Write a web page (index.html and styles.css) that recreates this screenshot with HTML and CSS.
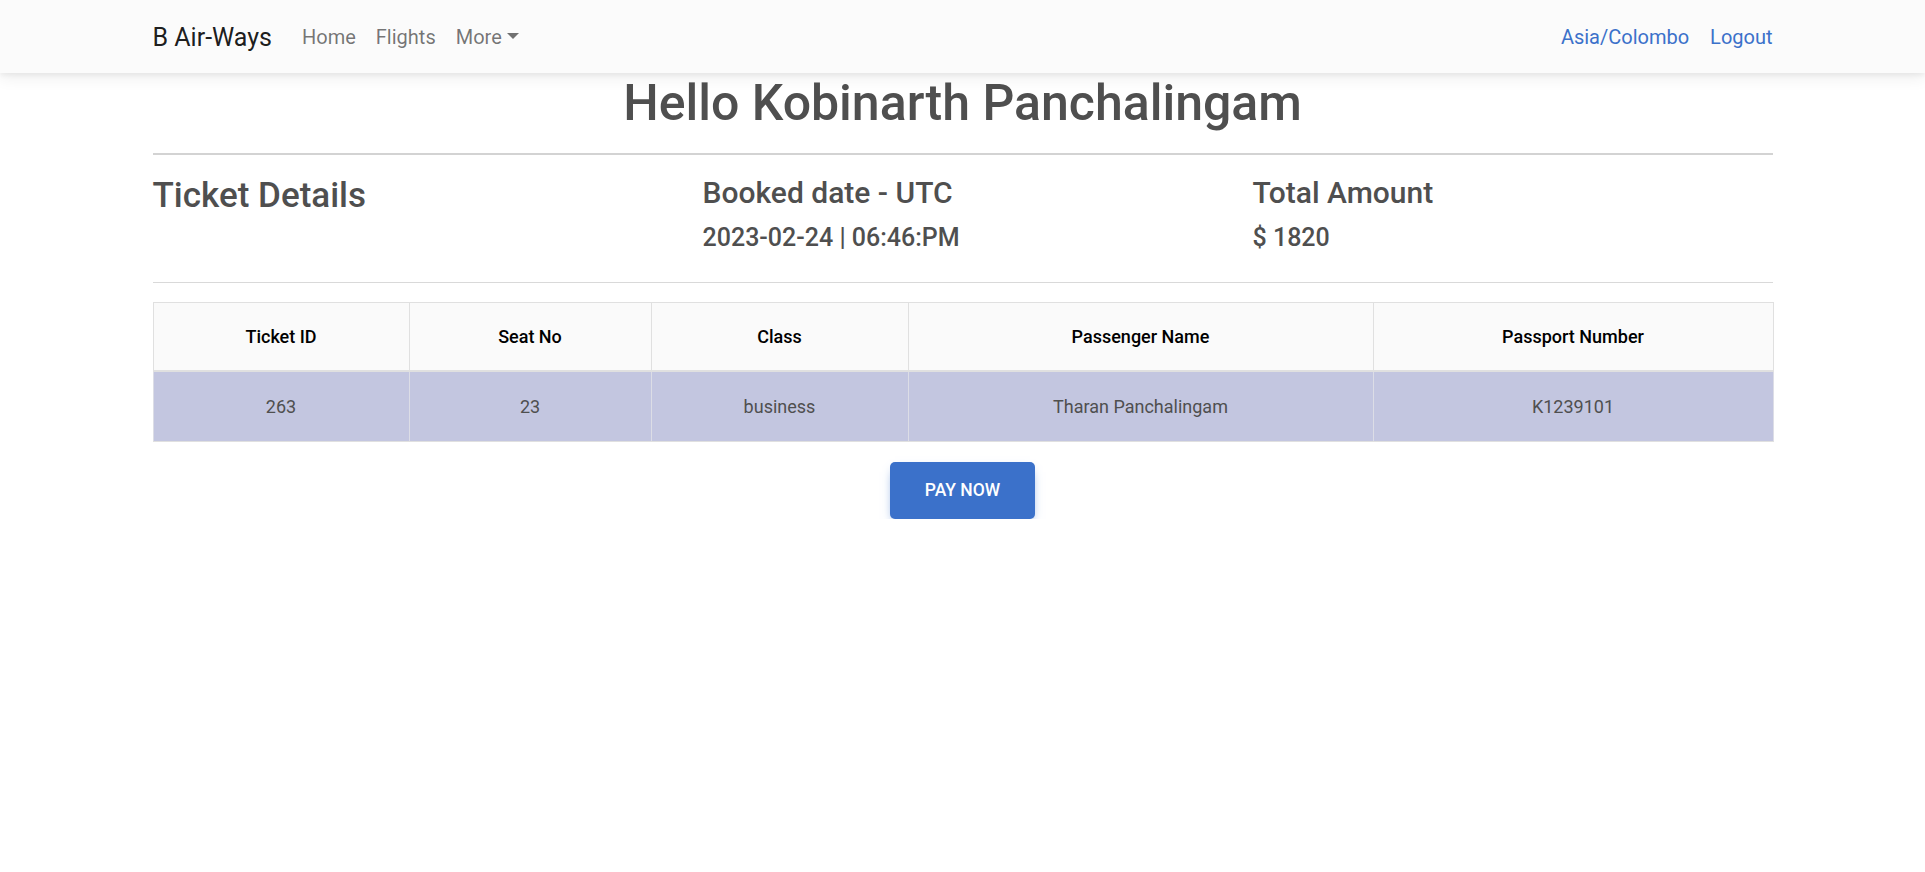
FILE: index.html
```html
<!DOCTYPE html>
<html lang="en">
<head>
<meta charset="utf-8">
<title>B Air-Ways - Ticket Details</title>
<link rel="stylesheet" href="styles.css">
</head>
<body>
<nav class="navbar">
  <div class="container nav-inner">
    <a class="brand" href="#">B Air-Ways</a>
    <ul class="nav-left">
      <li><a class="nav-link" href="#">Home</a></li>
      <li><a class="nav-link" href="#">Flights</a></li>
      <li><a class="nav-link dropdown-toggle" href="#">More</a></li>
    </ul>
    <div class="nav-right">
      <a class="nav-blue" href="#">Asia/Colombo</a>
      <a class="nav-blue" href="#">Logout</a>
    </div>
  </div>
</nav>

<main class="container">
  <h1 class="greeting">Hello Kobinarth Panchalingam</h1>
  <hr class="rule-strong">
  <div class="details">
    <div class="col">
      <h3 class="h3">Ticket Details</h3>
    </div>
    <div class="col">
      <h4 class="h4">Booked date - UTC</h4>
      <h5 class="h5">2023-02-24 | 06:46:PM</h5>
    </div>
    <div class="col">
      <h4 class="h4">Total Amount</h4>
      <h5 class="h5">$ 1820</h5>
    </div>
  </div>
  <hr class="rule-light">

  <table class="tickets">
    <colgroup>
      <col class="c1"><col class="c2"><col class="c3"><col class="c4"><col class="c5">
    </colgroup>
    <thead>
      <tr>
        <th>Ticket ID</th>
        <th>Seat No</th>
        <th>Class</th>
        <th>Passenger Name</th>
        <th>Passport Number</th>
      </tr>
    </thead>
    <tbody>
      <tr>
        <td>263</td>
        <td>23</td>
        <td>business</td>
        <td>Tharan Panchalingam</td>
        <td>K1239101</td>
      </tr>
    </tbody>
  </table>

  <div class="actions">
    <button class="btn-pay" type="button">Pay Now</button>
  </div>
</main>
</body>
</html>
```

FILE: styles.css
```css
* {
  box-sizing: border-box;
}

html, body {
  margin: 0;
  padding: 0;
  background: #ffffff;
}

body {
  font-family: Roboto, "Noto Sans", "Liberation Sans", sans-serif;
  font-size: 20px;
  line-height: 1.5;
  color: #4f4f4f;
}

a {
  text-decoration: none;
}

.container {
  width: 1620px;
  margin: 0 auto;
}

/* Navbar */
.navbar {
  background: #fbfbfb;
  box-shadow: 0 5px 15px 0 rgba(0, 0, 0, 0.07), 0 2.5px 5px 0 rgba(0, 0, 0, 0.05);
  position: relative;
  z-index: 2;
}

.nav-inner {
  display: flex;
  align-items: center;
  padding: 12.25px 0 10.25px;
}

.brand {
  font-size: 25px;
  line-height: 37.5px;
  padding: 6.25px 0;
  margin-right: 20px;
  color: rgba(0, 0, 0, 0.9);
}

.nav-left {
  list-style: none;
  margin: 0;
  padding: 0;
  display: flex;
  align-items: center;
}

.nav-link {
  display: block;
  padding: 0 10px;
  font-size: 20px;
  line-height: 30px;
  color: rgba(0, 0, 0, 0.55);
}

.dropdown-toggle::after {
  content: "";
  display: inline-block;
  margin-left: 5.1px;
  vertical-align: 5.1px;
  border-top: 6px solid;
  border-right: 6px solid transparent;
  border-left: 6px solid transparent;
  border-bottom: 0;
}

.nav-right {
  margin-left: auto;
  display: flex;
  align-items: center;
  gap: 21px;
}

.nav-blue {
  font-size: 20px;
  line-height: 30px;
  color: #3b71ca;
}

/* Headings */
.greeting {
  margin: 0;
  font-size: 50px;
  line-height: 1.2;
  font-weight: 500;
  text-align: center;
  color: #4f4f4f;
}

.rule-strong {
  border: 0;
  border-top: 2px solid #d3d3d3;
  margin: 20.5px 0 20px;
  height: 0;
}

.rule-light {
  border: 0;
  border-top: 1px solid #d9d9d9;
  margin: 19px 0 19px;
  height: 0;
}

.details {
  display: grid;
  grid-template-columns: repeat(3, 1fr);
  column-gap: 30px;
}

.h3,
.h4,
.h5 {
  font-weight: 500;
  color: #4f4f4f;
  margin: 0 0 10px;
}

.h3 {
  font-size: 35px;
  line-height: 42px;
}

.h4 {
  font-size: 30px;
  line-height: 36px;
  margin-bottom: 11.5px;
}

.h5 {
  font-size: 25px;
  line-height: 30px;
}

/* Table */
.tickets {
  width: 100%;
  border-collapse: collapse;
  table-layout: fixed;
  margin-bottom: 20px;
}

.c1 { width: 256px; }
.c2 { width: 242px; }
.c3 { width: 257px; }
.c4 { width: 465px; }
.c5 { width: 400px; }

.tickets th,
.tickets td {
  border: 1px solid #e0e0e0;
  text-align: center;
  font-size: 18px;
  line-height: 27px;
  padding: 20px 28px;
}

.tickets th {
  background: #fafafa;
  color: #000000;
  font-weight: 500;
  border-bottom: 2px solid #e0e0e0;
}

.tickets td {
  background: #c3c6e0;
  color: #4f4f4f;
  font-weight: 400;
  padding: 21px 28px;
  border-color: #dcdde6;
  border-bottom-color: #e0e0e0;
}

/* Button */
.actions {
  text-align: center;
}

.btn-pay {
  display: inline-block;
  font-family: Roboto, "Noto Sans", "Liberation Sans", sans-serif;
  font-size: 17.5px;
  font-weight: 500;
  line-height: 28px;
  text-transform: uppercase;
  color: #ffffff;
  background: #3b71ca;
  border: 0;
  border-radius: 5px;
  padding: 14.5px 35px;
  box-shadow: 0 5px 11px -5px #3b71ca;
  cursor: pointer;
}
```
